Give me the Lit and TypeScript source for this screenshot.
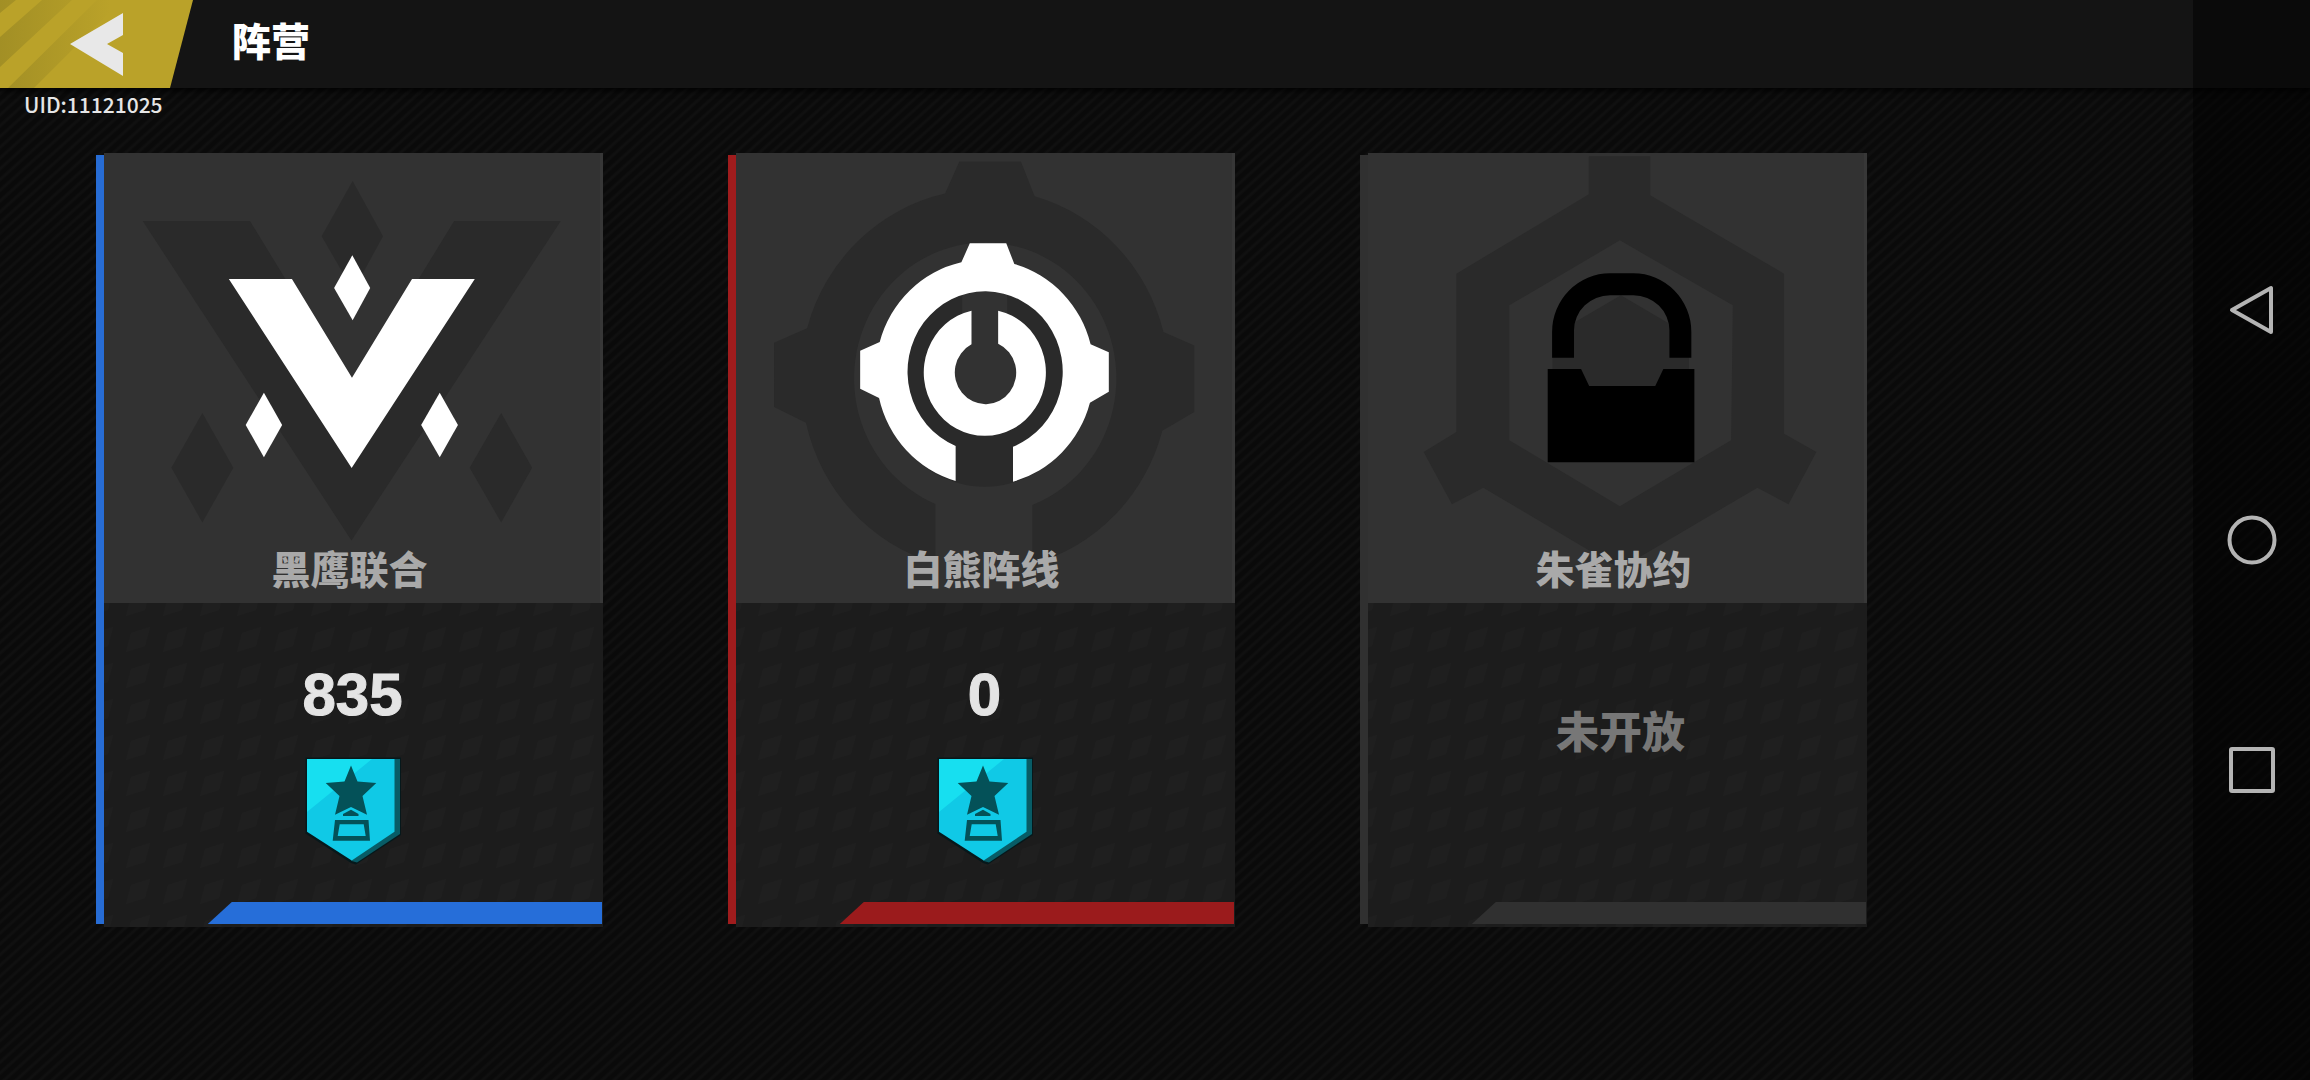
import { LitElement, html, css, svg, TemplateResult } from "lit";
import { customElement, property } from "lit/decorators.js";

type Faction = {
  id: string;
  name: string;
  points?: number;
};

const FACTIONS: Faction[] = [
  { id: "eagle", name: "黑鹰联合", points: 835 },
  { id: "bear", name: "白熊阵线", points: 0 },
  { id: "bird", name: "朱雀协约" },
];

const eagleShape = svg`
  <path d="M411 416H598L776 712L954 416H1140L775 983Z"/>
  <path d="M777 345L830 443L778 540L723 443Z"/>
  <path d="M515 757L569 854L515 951L461 854Z"/>
  <path d="M1036 757L1090 854L1036 951L981 854Z"/>`;

const bearShape = svg`
  <path d="M700 1022A323 337 0 0 1 473 773L417 745V631L475 605A323 337 0 0 1 717 366L742 309H850L874 371A323 337 0 0 1 1100 612L1154 636V754L1098 787A323 337 0 0 1 870 1024V919A230 241 0 1 0 700 917Z"/>
  <path d="M747 612A91 95 0 1 0 826 610V511A181 190 0 1 1 747 511Z"/>`;

const EMBLEMS: Record<string, TemplateResult> = {
  eagle: html`<svg class="emblem" viewBox="41 38 1479 1350" preserveAspectRatio="none" aria-hidden="true">
    <g class="shade" transform="translate(-543 -461) scale(1.7 1.69)">${eagleShape}</g>
    <g class="mark">${eagleShape}</g>
  </svg>`,
  bear: html`<svg class="emblem" viewBox="49 38 1479 1350" preserveAspectRatio="none" aria-hidden="true">
    <g class="shade" transform="translate(-543 -459) scale(1.69)">${bearShape}</g>
    <g class="mark">${bearShape}</g>
  </svg>`,
  bird: html`<svg class="emblem" viewBox="53 38 1480 1350" preserveAspectRatio="none" aria-hidden="true">
    <path class="shade" fill-rule="evenodd" d="M708 48H890V165L1287 400V880L1383 935L1300 1092L1208 1042L800 1285L395 1042L302 1092L218 935L315 875V400L708 162ZM800 300L472 495V900L800 1098L1130 900L1135 495Z"/>
    <path class="shade" d="M803 465L1005 585V815L803 930L600 815V585Z"/>
    <path class="lock" d="M599 652V575A172 176 0 0 1 771 399H840A172 176 0 0 1 1012 575V652H947V570A107 105 0 0 0 840 465H771A107 105 0 0 0 664 570V652Z"/>
    <path class="lock" d="M586 686H685L709 737H905L929 686H1021V966H586Z"/>
  </svg>`,
};

@customElement("faction-card")
export class FactionCard extends LitElement {
  @property({ attribute: false }) faction!: Faction;

  static styles = css`
    :host { display: block; min-width: 0; }
    .card { display: grid; grid-template-columns: 8px 1fr; }
    .edge { margin: 2px 0 3px; background: var(--edge); }
    .eagle { --edge: #276cd4; --foot: #266ed9; }
    .bear { --edge: #9f1c1d; --foot: #9b1b1c; }
    .bird { --edge: #303030; --foot: #303030; }
    .panel, .lower { display: grid; }
    .panel > *, .lower > * { grid-area: 1 / 1; }
    .panel { aspect-ratio: 499 / 450; background: #323232; box-shadow: inset -3px 0 #373737; }
    .emblem { display: block; width: 100%; height: 100%; min-height: 0; }
    .shade { fill: #2a2a2a; }
    .mark { fill: #fff; }
    .lock { fill: #000; }
    .name {
      align-self: end; margin: 0; padding: 0 8px 6px 0; text-align: center;
      font-size: 39px; line-height: 60px; font-weight: 900; color: #a9a9a9;
    }
    .lower { height: 324px; background: #1c1c1c; }
    .texture { display: block; width: 100%; height: 100%; }
    .status { display: flex; flex-direction: column; align-items: center; padding: 56px 2px 0 0; }
    .points {
      margin: 0; font: bold 60px/72px "Liberation Sans", Arial, sans-serif;
      color: #e4e4e4; -webkit-text-stroke: 1px #e4e4e4;
    }
    .badge { width: 98px; height: 112px; margin-top: 24px; }
    .closed { margin: 0; padding: 38px 0 0 8px; font-size: 43px; line-height: 64px; font-weight: 900; color: #777; }
    .foot {
      align-self: end; justify-self: end; width: 79%; height: 22px; margin: 0 1px 3px 0;
      background: var(--foot); clip-path: polygon(24px 0, 100% 0, 100% 100%, 0 100%);
    }
  `;

  private badge() {
    return svg`<svg class="badge" viewBox="303 755 98 112" aria-hidden="true">
      <path d="M304.500 757.500H400V835L355 864.500L350 863L304.500 833.500Z" fill="#06181b"/>
      <path d="M306 759H399V834L356 862.500L350.700 861Z" fill="#085c66"/>
      <path d="M306 759H393.500V831.700L350.700 860.500L306 831.700Z" fill="#10c9e6"/>
      <path d="M306 759H371L306 812Z" fill="#17dff0"/>
      <path d="M350 765.500L356.500 781.500L375.300 783L361.500 796L366 814.700L350 807L334 814.700L338.500 796L324.700 783L343.500 781.500Z" fill="#045158"/>
      <path d="M350 809.700L357.500 814V816H342V814Z" fill="#045158"/>
      <path fill-rule="evenodd" d="M334 820H367.500L369 840.700H331.700ZM338.700 824.300L336.700 836H364.700L362.700 824.300Z" fill="#045158"/>
    </svg>`;
  }

  render() {
    const f = this.faction;
    return html`<article class="card ${f.id}">
      <div class="edge"></div>
      <div class="body">
        <div class="panel">
          ${EMBLEMS[f.id]}
          <h2 class="name">${f.name}</h2>
        </div>
        <div class="lower">
          <svg class="texture" aria-hidden="true">
            <defs>
              <pattern id="studs" width="37" height="36" patternUnits="userSpaceOnUse" y="24">
                <path d="M27 6L46 0L41 19L22 25Z M-10 6L9 0L4 19L-15 25Z" fill="#1f1f1f"/>
              </pattern>
            </defs>
            <rect width="100%" height="100%" fill="url(#studs)"/>
          </svg>
          <div class="status">
            ${f.points === undefined
              ? html`<p class="closed">未开放</p>`
              : html`<p class="points">${f.points}</p>${this.badge()}`}
          </div>
          <div class="foot"></div>
        </div>
      </div>
    </article>`;
  }
}

@customElement("app-root")
export class AppRoot extends LitElement {
  static styles = css`
    :host {
      display: grid; grid-template-columns: minmax(0, 1fr) 117px; grid-template-rows: 88px 1fr;
      min-height: 100vh; color: #fff;
      font-family: "Noto Sans CJK SC", "Noto Sans", sans-serif;
      background: repeating-linear-gradient(138deg, #0a0a0a 0 3px, #101010 5px 6px, #0a0a0a 8px);
    }
    .bar {
      grid-area: 1 / 1 / 2 / 3; display: flex; align-items: center; gap: 39px;
      background: #141414; box-shadow: 0 2px 6px #000;
    }
    .back { width: 193px; height: 88px; padding: 0; border: 0; background: none; cursor: pointer; }
    .back svg { display: block; width: 100%; height: 100%; }
    .title { margin: 0; padding-bottom: 10px; font-size: 39px; line-height: 60px; font-weight: 900; }
    .main { grid-area: 2 / 1; }
    .uid { margin: 0; padding: 0 24px; font-size: 21px; line-height: 32px; font-weight: 500; color: #e6e6e6; }
    .cards {
      display: grid; grid-template-columns: repeat(3, minmax(0, 507px)); gap: 125px;
      padding: 33px 96px 40px;
    }
    .nav {
      grid-area: 1 / 2 / 3 / 3; z-index: 1; display: flex; flex-direction: column;
      align-items: center; justify-content: center; gap: 180px; background: rgba(0, 0, 0, 0.48);
    }
    .key { width: 50px; height: 50px; padding: 0; border: 0; background: none; cursor: pointer; }
    .key svg { display: block; width: 50px; height: 50px; fill: none; stroke: #b4b4b4; stroke-width: 4; stroke-linejoin: round; }
  `;

  render() {
    return html`
      <header class="bar">
        <button class="back" aria-label="返回">
          <svg viewBox="0 0 193 88" preserveAspectRatio="none">
            <defs>
              <linearGradient id="fade" gradientUnits="userSpaceOnUse" x1="0" y1="0" x2="110" y2="0">
                <stop offset="0" stop-color="#a28f25"/>
                <stop offset="1" stop-color="#a28f25" stop-opacity="0"/>
              </linearGradient>
            </defs>
            <path d="M0 0H193L170 88H0Z" fill="#baa229"/>
            <path d="M0 0H16L0 13ZM42 0H72L0 67V37ZM97 0H122L34 88H8Z" fill="url(#fade)"/>
            <path d="M70 44L123 13V35L107 44L123 53V76Z" fill="#e8e8e8"/>
          </svg>
        </button>
        <h1 class="title">阵营</h1>
      </header>
      <main class="main">
        <p class="uid">UID:11121025</p>
        <section class="cards">
          ${FACTIONS.map((f) => html`<faction-card .faction=${f}></faction-card>`)}
        </section>
      </main>
      <nav class="nav">
        <button class="key" aria-label="后退"><svg viewBox="0 0 50 50"><path d="M5 25L44 3V47Z"/></svg></button>
        <button class="key" aria-label="主页"><svg viewBox="0 0 50 50"><circle cx="25" cy="25" r="22.500"/></svg></button>
        <button class="key" aria-label="最近任务"><svg viewBox="0 0 50 50"><rect x="4" y="4" width="42" height="42" rx="1"/></svg></button>
      </nav>`;
  }
}
